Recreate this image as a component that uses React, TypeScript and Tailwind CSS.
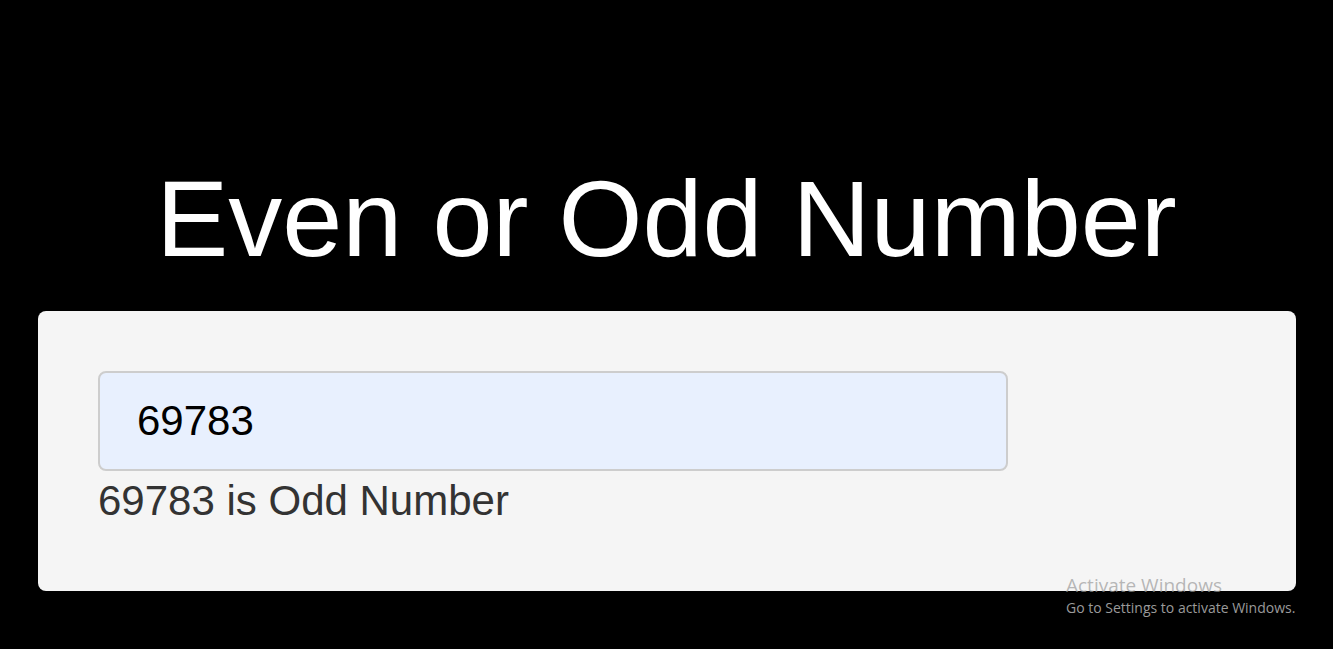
import { useState } from 'react';

export default function App() {
  const [value, setValue] = useState('69783');

  const num = parseInt(value, 10);
  const result = isNaN(num) ? '' : `${num} is ${num % 2 === 0 ? 'Even' : 'Odd'} Number`;

  return (
    <div
      className="relative min-h-[649px] bg-black pt-[165px] flex flex-col items-center"
      style={{ fontFamily: '"Liberation Sans", Arial, sans-serif' }}
    >
      <h1 className="text-white text-[108px] leading-none font-normal">Even or Odd Number</h1>

      <div className="mt-[38px] w-[1258px] self-start ml-[38px] bg-[#f5f5f5] rounded-lg p-[60px]">
        <input
          type="text"
          value={value}
          onChange={(e) => setValue(e.target.value)}
          className="block w-4/5 h-[100px] bg-[#e8f0fe] border-2 border-[#cdcdcd] rounded-lg pl-[37px] text-[42px] text-black outline-none"
        />
        <p className="text-[42px] leading-[60px] text-[#333]">{result}</p>
      </div>

      {/* windows watermark */}
      <div
        className="absolute left-[1066px] top-[573px] pointer-events-none"
        style={{ fontFamily: '"Open Sans", "Noto Sans", sans-serif' }}
      >
        <div className="text-[19px] leading-6 text-[#9a9a9a]/70">Activate Windows</div>
        <div className="text-[14px] leading-5 text-[#9a9a9a] mt-[1px]">Go to Settings to activate Windows.</div>
      </div>
    </div>
  );
}
